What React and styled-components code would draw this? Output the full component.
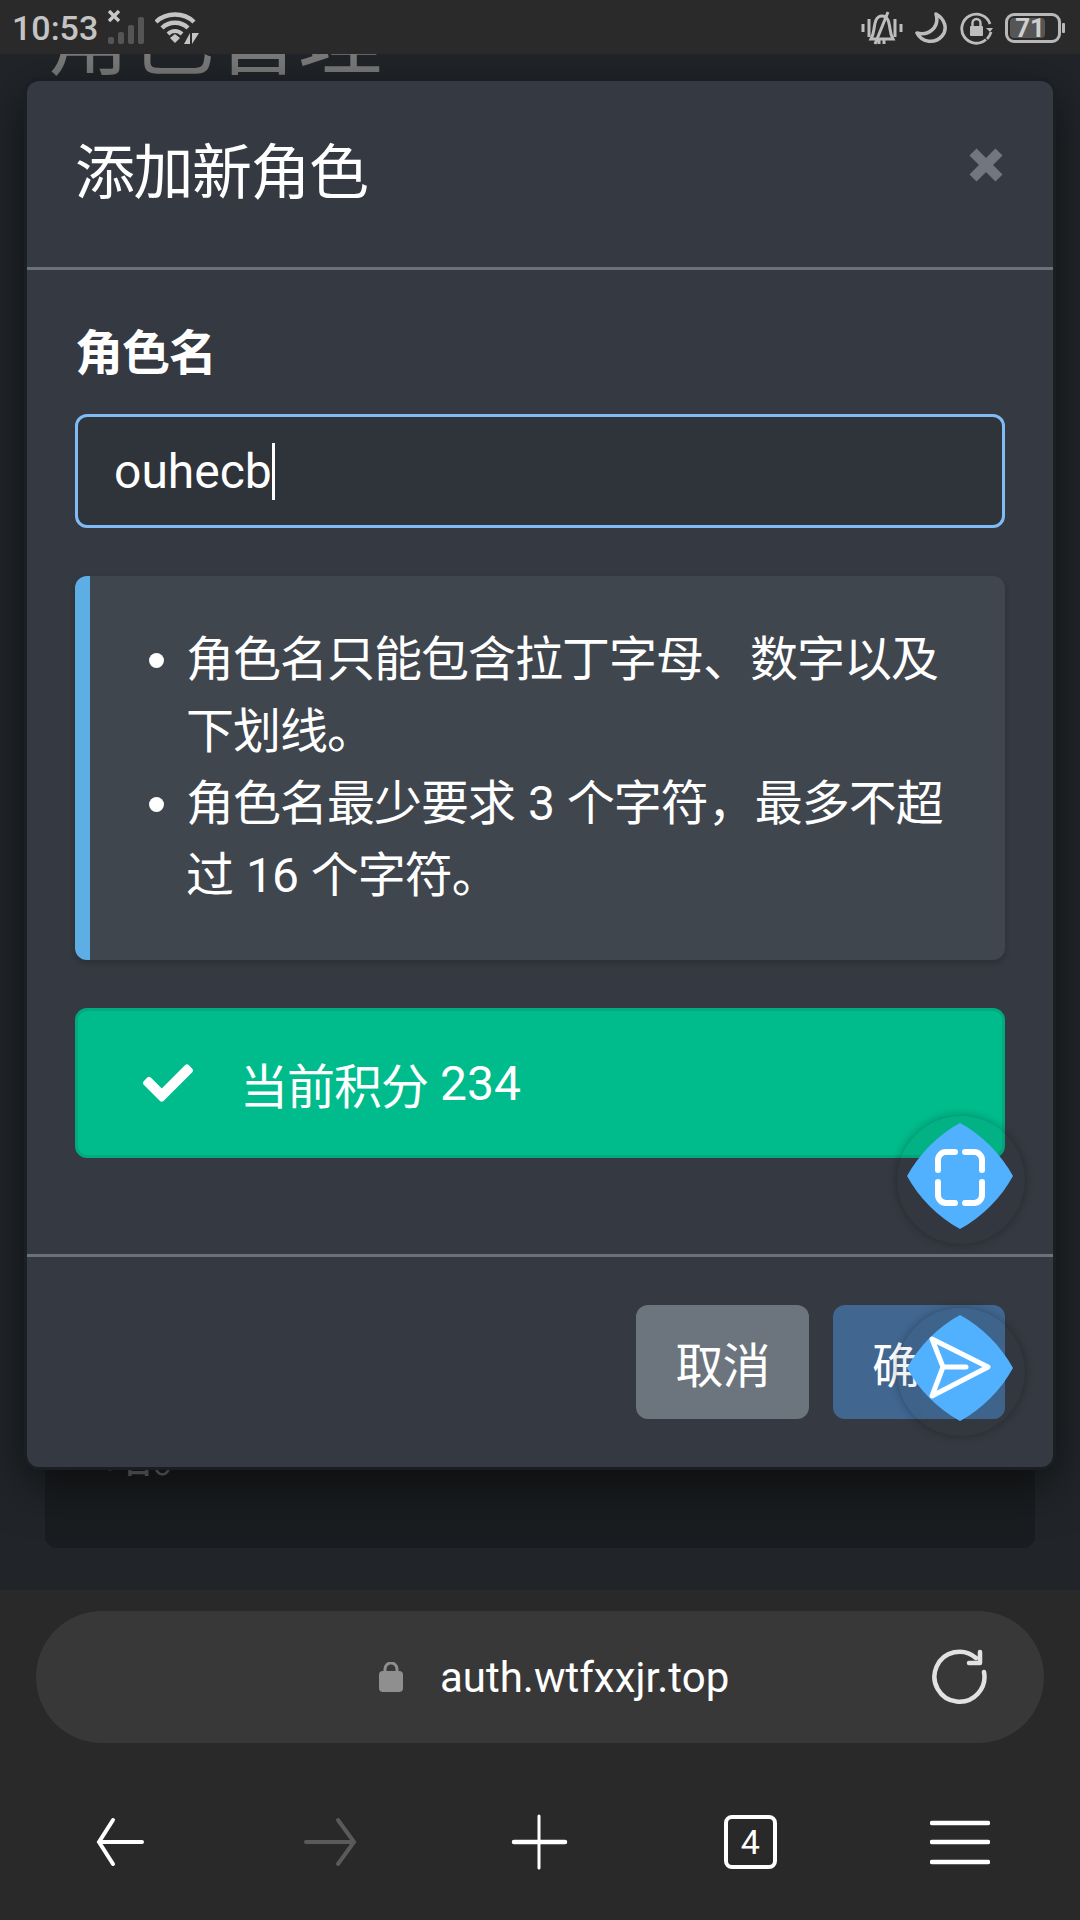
import React from 'react';
import styled, { createGlobalStyle } from 'styled-components';
import { FaCheck } from 'react-icons/fa';

const GlobalStyle = createGlobalStyle`
  html, body { margin: 0; padding: 0; background: #212529; }
  * { box-sizing: border-box; }
  body { font-family: Roboto, "Noto Sans CJK SC", sans-serif; }
`;

const Screen = styled.div`
  width: 1080px;
  height: 1920px;
  display: flex;
  flex-direction: column;
  overflow: hidden;
`;

const StatusBar = styled.div`
  height: 54px;
  flex: none;
  display: flex;
  justify-content: space-between;
  align-items: center;
  padding: 2px 15px 0 12px;
  background: #2a2a2a;
  color: #c4c4c4;
  position: relative;
  z-index: 3;
`;

const StatusGroup = styled.div`
  display: flex;
  align-items: center;
  gap: ${(p) => p.$gap || 0}px;
`;

const Time = styled.span`
  font-size: 34px;
  font-weight: 500;
  line-height: 40px;
  margin-right: 9px;
`;

const Battery = styled.div`
  display: flex;
  align-items: center;
  gap: 1px;
`;

const BatteryBody = styled.div`
  width: 56px;
  height: 30px;
  border: 3px solid #b8b8b8;
  border-radius: 9px;
  padding: 2px;
`;

const BatteryFill = styled.div`
  width: 35px;
  height: 20px;
  background: #565656;
  border-radius: 4px;
  font-size: 26px;
  line-height: 20px;
  font-weight: 700;
  color: #cfcfcf;
  text-align: right;
`;

const BatteryTip = styled.div`
  width: 3px;
  height: 10px;
  background: #b8b8b8;
  border-radius: 1px;
`;

const Page = styled.div`
  flex: 1;
  position: relative;
  overflow: hidden;
  display: flex;
  flex-direction: column;
  background: #212529;
  padding: 0 45px 42px;
`;

const PageTitle = styled.div`
  font-size: 84px;
  line-height: 120px;
  color: #7b7b7b;
  margin-top: -74px;
  margin-left: 1px;
`;

const BackCard = styled.div`
  margin-top: auto;
  background: #1a1d20;
  border-radius: 12px;
  padding: 0 60px 56px;
  font-size: 48px;
  line-height: 72px;
  color: #6d6d6d;
`;

const Modal = styled.div`
  position: absolute;
  top: 24px;
  left: 24px;
  width: 1032px;
  background: #353941;
  border: 3px solid #1b1e22;
  border-radius: 15px;
  box-shadow: 0 15px 48px rgba(0, 0, 0, 0.55);
  color: #fff;
`;

const ModalHeader = styled.div`
  display: flex;
  justify-content: space-between;
  align-items: center;
  padding: 48px;
  border-bottom: 3px solid #69727b;
`;

const ModalTitle = styled.div`
  font-size: 60px;
  line-height: 90px;
  letter-spacing: -1.5px;
`;

const CloseButton = styled.svg`
  width: 36px;
  height: 36px;
  margin: -19px 1px 0 0;
`;

const ModalBody = styled.div`
  padding: 48px;
`;

const FieldLabel = styled.div`
  font-size: 48px;
  line-height: 72px;
  font-weight: 700;
  letter-spacing: -1px;
  margin-bottom: 24px;
`;

const InputBox = styled.div`
  height: 114px;
  display: flex;
  align-items: center;
  padding: 0 36px;
  background: #2f333a;
  border: 3px solid #80bbf5;
  border-radius: 12px;
  font-size: 48px;
  margin-bottom: 48px;
`;

const Caret = styled.span`
  width: 3px;
  height: 57px;
  background: #fff;
`;

const InfoBox = styled.div`
  background: #3f464e;
  border-left: 15px solid #5eaee6;
  border-radius: 12px;
  padding: 48px;
  margin-bottom: 48px;
  box-shadow: 0 3px 6px rgba(0, 0, 0, 0.2);
`;

const InfoList = styled.ul`
  margin: 0;
  padding-left: 48px;
  font-size: 48px;
  line-height: 72px;
  letter-spacing: -1px;
  word-spacing: 2px;
`;

const SuccessBox = styled.div`
  height: 150px;
  display: flex;
  align-items: center;
  padding: 0 60px;
  margin-bottom: 48px;
  background: #00bc8c;
  border: 3px solid #00ab80;
  border-radius: 12px;
  font-size: 48px;
  white-space: pre;
`;

const CheckWrap = styled.span`
  width: 60px;
  margin-right: 42px;
  display: flex;
  justify-content: center;
  font-size: 50px;
`;

const Cjk = styled.span`
  letter-spacing: -1px;
`;

const ModalFooter = styled.div`
  display: flex;
  justify-content: flex-end;
  gap: 24px;
  padding: 48px;
  border-top: 3px solid #69727b;
`;

const Button = styled.div`
  height: 114px;
  width: ${(p) => p.$width}px;
  display: flex;
  align-items: center;
  justify-content: center;
  background: ${(p) => p.$bg};
  border-radius: 12px;
  font-size: 48px;
  letter-spacing: -1px;
`;

const Fab = styled.svg`
  position: absolute;
  left: 897px;
  top: ${(p) => p.$top}px;
  width: 128px;
  height: 128px;
  border-radius: 50%;
  background: rgba(30, 40, 40, 0.06);
  box-shadow: 0 0 10px rgba(0, 0, 0, 0.3);
`;

const BrowserBar = styled.div`
  height: 330px;
  flex: none;
  background: #292929;
  padding: 21px 36px 0 36px;
  display: flex;
  flex-direction: column;
`;

const UrlBar = styled.div`
  height: 132px;
  border-radius: 66px;
  background: #383838;
  display: flex;
  align-items: center;
  padding: 0 56px 0 343px;
`;

const UrlText = styled.span`
  font-size: 42px;
  color: #fff;
  margin-left: 37px;
  flex: 1;
`;

const NavRow = styled.div`
  display: flex;
  justify-content: space-between;
  align-items: center;
  margin: 69px 54px 0;
`;

const NavIcon = styled.svg`
  width: 60px;
  height: 60px;
  display: block;
`;

const TabCount = styled.div`
  width: 53px;
  height: 54px;
  margin: 0 3px;
  border: 4px solid #fff;
  border-radius: 8px;
  display: flex;
  align-items: center;
  justify-content: center;
  font-size: 34px;
  color: #fff;
`;

const diamond = 'M63 7 C85 19 104 38 116 60 C104 82 85 101 63 113 C41 101 22 82 10 60 C22 38 41 19 63 7Z';

const SignalIcon = () => (
  <svg width="38" height="34" viewBox="0 0 38 34" fill="none" style={{ marginTop: -2 }}>
    <rect x="1" y="27" width="6" height="7" rx="2" fill="#555" />
    <rect x="11" y="22" width="6" height="12" rx="2" fill="#555" />
    <rect x="21" y="15" width="6" height="19" rx="2" fill="#555" />
    <rect x="31" y="7" width="6" height="27" rx="2" fill="#555" />
    <path d="M2 1 L12 11 M12 1 L2 11" stroke="#c8c8c8" strokeWidth="3.4" />
  </svg>
);

const WifiIcon = () => (
  <svg width="44" height="34" viewBox="0 0 44 34" fill="none" style={{ marginLeft: 10 }}>
    <path d="M1 11 C11 1 29 1 39 11" stroke="#c4c4c4" strokeWidth="4.4" />
    <path d="M7 17 C14 10 26 10 33 17" stroke="#c4c4c4" strokeWidth="4.4" />
    <path d="M13 23 C17 19 23 19 27 23" stroke="#c4c4c4" strokeWidth="4" />
    <path d="M15 27 L20 23 L25 27 L20 32Z" fill="#c4c4c4" />
    <path d="M29 33 L35 22 V33Z M37 22 L44 22 L37 33Z" fill="#c4c4c4" />
  </svg>
);

const BellIcon = () => (
  <svg width="42" height="34" viewBox="0 0 42 34" fill="none" stroke="#bdbdbd" strokeWidth="3">
    <path d="M2 13 V21 M8 8 V26 M34 8 V26 M40 13 V21" />
    <path d="M21 5 C15 5 14 11 13 18 C12.500 22 11.500 25 10 28 H32 C30.500 25 29.500 22 29 18 C28 11 27 5 21 5Z" />
    <path d="M14 33 L27 1 M18 29 V33 M23 29 V33" />
  </svg>
);

const MoonIcon = () => (
  <svg width="33" height="32" viewBox="0 0 33 32" fill="none">
    <path d="M21 2 C30 7 33 17 27 24 C20 32 7 31 2 21 C13 24 25 16 21 2Z" stroke="#bdbdbd" strokeWidth="3.5" strokeLinejoin="round" />
  </svg>
);

const RotationLockIcon = () => (
  <svg width="33" height="33" viewBox="0 0 33 33" fill="none">
    <path d="M30 12 A14.500 14.500 0 1 0 26 27.500" stroke="#bdbdbd" strokeWidth="2.800" />
    <path d="M31 20 A15 15 0 0 1 27 27" stroke="#bdbdbd" strokeWidth="2.800" />
    <path d="M26 16 L33 16 L30 20Z" fill="#bdbdbd" />
    <rect x="10" y="14" width="13" height="10" rx="1" fill="#bdbdbd" />
    <path d="M12.500 14 V11 A4 4 0 0 1 20.500 11 V14" stroke="#bdbdbd" strokeWidth="2.400" />
  </svg>
);

export default function App() {
  return (
    <Screen>
      <GlobalStyle />
      <StatusBar>
        <StatusGroup>
          <Time>10:53</Time>
          <SignalIcon />
          <WifiIcon />
        </StatusGroup>
        <StatusGroup $gap={12}>
          <BellIcon />
          <MoonIcon />
          <RotationLockIcon />
          <Battery>
            <BatteryBody>
              <BatteryFill>71</BatteryFill>
            </BatteryBody>
            <BatteryTip />
          </Battery>
        </StatusGroup>
      </StatusBar>

      <Page>
        <PageTitle>角色管理</PageTitle>
        <BackCard>略。</BackCard>

        <Modal>
          <ModalHeader>
            <ModalTitle>添加新角色</ModalTitle>
            <CloseButton viewBox="0 0 36 36">
              <path d="M5 5 L31 31 M31 5 L5 31" stroke="#70777f" strokeWidth="10" />
            </CloseButton>
          </ModalHeader>
          <ModalBody>
            <FieldLabel>角色名</FieldLabel>
            <InputBox>
              ouhecb
              <Caret />
            </InputBox>
            <InfoBox>
              <InfoList>
                <li>角色名只能包含拉丁字母、数字以及下划线。</li>
                <li>角色名最少要求 3 个字符，最多不超过 16 个字符。</li>
              </InfoList>
            </InfoBox>
            <SuccessBox>
              <CheckWrap>
                <FaCheck />
              </CheckWrap>
              <Cjk>当前积分</Cjk> 234
            </SuccessBox>
          </ModalBody>
          <ModalFooter>
            <Button $width={173} $bg="#6c757d">取消</Button>
            <Button $width={172} $bg="#416791">确定</Button>
          </ModalFooter>
        </Modal>

        <Fab $top={1062} viewBox="0 0 128 128" fill="none">
          <path d={diamond} fill="#52b1ff" />
          <path
            d="M41 54 V44 a8 8 0 0 1 8-8 H58 M68 36 H77 a8 8 0 0 1 8 8 V54 M41 66 V79 a8 8 0 0 0 8 8 H58 M68 87 H77 a8 8 0 0 0 8-8 V66"
            stroke="#fff"
            strokeWidth="6"
            strokeLinecap="round"
          />
        </Fab>
        <Fab $top={1254} viewBox="0 0 128 128" fill="none">
          <rect x="24" y="-3" width="84" height="114" rx="12" fill="#3f648c" />
          <path d={diamond} fill="#52b1ff" />
          <path d="M35 31 L91 59 L35 88 L46 59 Z M46 59 H69" stroke="#fff" strokeWidth="5" strokeLinejoin="round" strokeLinecap="round" />
        </Fab>
      </Page>

      <BrowserBar>
        <UrlBar>
          <svg width="24" height="30" viewBox="0 0 24 30" fill="none">
            <rect y="9" width="24" height="21" rx="4" fill="#8f8f8f" />
            <path d="M6 11 V7 A6 6 0 0 1 18 7 V11" stroke="#8f8f8f" strokeWidth="3" />
          </svg>
          <UrlText>auth.wtfxxjr.top</UrlText>
          <svg width="58" height="58" viewBox="0 0 58 58" fill="none" stroke="#e2e2e2" strokeWidth="4.500" strokeLinecap="round">
            <path d="M54 24 A25 25 0 1 1 46 10" />
            <path d="M50 4 V15 H39" strokeLinejoin="round" />
          </svg>
        </UrlBar>
        <NavRow>
          <NavIcon viewBox="0 0 60 60" fill="none" stroke="#fff" strokeWidth="4" strokeLinecap="round">
            <path d="M52 30 H10 M23 8 L9 30 L23 52" />
          </NavIcon>
          <NavIcon viewBox="0 0 60 60" fill="none" stroke="#5a5a5a" strokeWidth="4" strokeLinecap="round">
            <path d="M6 30 H53 M38 8 L54 30 L38 52" />
          </NavIcon>
          <NavIcon viewBox="0 0 60 60" fill="none" stroke="#fff" strokeLinecap="round">
            <path d="M3 30 H54" strokeWidth="4.500" />
            <path d="M28 4 V56" strokeWidth="3" />
          </NavIcon>
          <TabCount>4</TabCount>
          <NavIcon viewBox="0 0 60 60" fill="none" stroke="#fff" strokeWidth="4.500" strokeLinecap="round">
            <path d="M2 11 H58 M2 30 H58 M2 50 H58" />
          </NavIcon>
        </NavRow>
      </BrowserBar>
    </Screen>
  );
}
